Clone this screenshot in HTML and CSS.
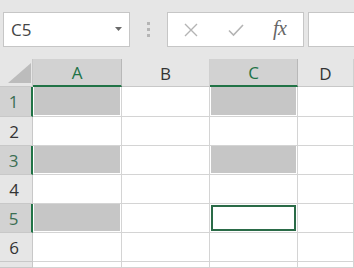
FILE: index.html
```html
<!DOCTYPE html>
<html>
<head>
<meta charset="utf-8">
<link rel="stylesheet" href="styles.css">
</head>
<body>
<div class="toolbar">
  <div class="namebox">
    <span class="ref">C5</span>
    <svg class="caret" width="7" height="4" viewBox="0 0 7 4"><path d="M0 0H7L3.5 4Z" fill="#6a6a6a"/></svg>
  </div>
  <div class="dots"><i></i><i></i><i></i></div>
  <div class="fxbox">
    <svg class="ico" width="14" height="14" viewBox="0 0 14 14"><path d="M1 1L13 13M13 1L1 13" stroke="#b4b4b4" stroke-width="1.4" fill="none"/></svg>
    <svg class="ico" width="16" height="14" viewBox="0 0 16 14"><path d="M1 7.5L5.5 12L15 2" stroke="#b4b4b4" stroke-width="1.6" fill="none"/></svg>
    <span class="fx">fx</span>
  </div>
  <div class="formula"></div>
</div>
<div class="sheet">
  <div class="corner"><svg width="33" height="28" viewBox="0 0 33 28"><path d="M8 24H31V4Z" fill="#bcbcbc"/></svg></div>
  <div class="colhead sel">A</div>
  <div class="colhead">B</div>
  <div class="colhead sel">C</div>
  <div class="colhead">D</div>

  <div class="rowhead sel">1</div>
  <div class="cell"><div class="fill"></div></div>
  <div class="cell"></div>
  <div class="cell"><div class="fill"></div></div>
  <div class="cell"></div>

  <div class="rowhead">2</div>
  <div class="cell"></div>
  <div class="cell"></div>
  <div class="cell"></div>
  <div class="cell"></div>

  <div class="rowhead sel">3</div>
  <div class="cell"><div class="fill"></div></div>
  <div class="cell"></div>
  <div class="cell"><div class="fill"></div></div>
  <div class="cell"></div>

  <div class="rowhead">4</div>
  <div class="cell"></div>
  <div class="cell"></div>
  <div class="cell"></div>
  <div class="cell"></div>

  <div class="rowhead sel">5</div>
  <div class="cell"><div class="fill"></div></div>
  <div class="cell"></div>
  <div class="cell"><div class="active"></div></div>
  <div class="cell"></div>

  <div class="rowhead">6</div>
  <div class="cell"></div>
  <div class="cell"></div>
  <div class="cell"></div>
  <div class="cell"></div>

  <div class="rowhead"></div>
  <div class="cell"></div>
  <div class="cell"></div>
  <div class="cell"></div>
  <div class="cell"></div>
</div>
</body>
</html>
```

FILE: styles.css
```css
* { box-sizing: border-box; }
html, body {
  margin: 0;
  padding: 0;
  background: #e6e6e6;
  font-family: "Open Sans", "Noto Sans", sans-serif;
  overflow: hidden;
}
.toolbar {
  height: 59px;
  display: flex;
  align-items: flex-start;
  padding-top: 12px;
  padding-left: 3px;
}
.namebox {
  width: 127px;
  height: 35px;
  background: #fff;
  border: 1px solid #c6c6c6;
  display: flex;
  align-items: center;
  justify-content: space-between;
  padding: 0 7px 0 7px;
}
.ref {
  font-size: 17px;
  color: #444;
  line-height: 1;
}
.caret { margin-top: -1px; }
.dots {
  margin-left: 17px;
  width: 3px;
  display: flex;
  flex-direction: column;
  gap: 3px;
  padding-top: 10px;
}
.dots i {
  display: block;
  width: 3px;
  height: 3px;
  background: #b5b5b5;
}
.fxbox {
  margin-left: 17px;
  width: 137px;
  height: 35px;
  background: #fff;
  border: 1px solid #c6c6c6;
  display: flex;
  align-items: center;
  padding-left: 16px;
}
.fxbox .ico:nth-child(2) { margin-left: 30px; }
.fx {
  margin-left: 29px;
  font-family: "Liberation Serif", "DejaVu Serif", serif;
  font-style: italic;
  font-size: 20px;
  color: #666;
  letter-spacing: -0.5px;
  margin-top: -2px;
}
.formula {
  margin-left: 4px;
  flex: 1;
  height: 35px;
  background: #fff;
  border: 1px solid #c6c6c6;
  border-right: none;
}
.sheet {
  display: grid;
  grid-template-columns: 33px 89px 88px 88px 1fr;
  grid-template-rows: 28px 30px repeat(5, 29px) 6px;
  background: #fff;
}
.corner {
  background: #e6e6e6;
  border-right: 1px solid #c8c8c8;
  border-bottom: 1px solid #c8c8c8;
}
.corner svg { display: block; }
.colhead {
  background: #e6e6e6;
  border-bottom: 1px solid #c8c8c8;
  border-right: 1px solid #d0d0d0;
  display: flex;
  align-items: center;
  justify-content: center;
  font-size: 17px;
  color: #333;
  padding-top: 1px;
}
.colhead.sel {
  background: #d2d2d2;
  color: #217346;
  border-bottom: 2px solid #217346;
  border-right: 1px solid #b8b8b8;
}
.rowhead {
  background: #e6e6e6;
  border-right: 1px solid #c8c8c8;
  border-bottom: 1px solid #c8c8c8;
  display: flex;
  align-items: center;
  justify-content: center;
  padding-right: 4px;
  font-size: 17px;
  color: #333;
}
.rowhead.sel {
  background: #d2d2d2;
  color: #3b6e52;
  border-right: 2px solid #217346;
}
.cell {
  border-right: 1px solid #d4d4d4;
  border-bottom: 1px solid #d4d4d4;
  display: flex;
  background: #fff;
}
.fill {
  flex: 1;
  margin: 0 1px 1px 1px;
  background: #c6c6c6;
}
.active {
  flex: 1;
  margin: 1px 1px 1px 1px;
  border: 2px solid #2a6b47;
  background: #fff;
}
```
